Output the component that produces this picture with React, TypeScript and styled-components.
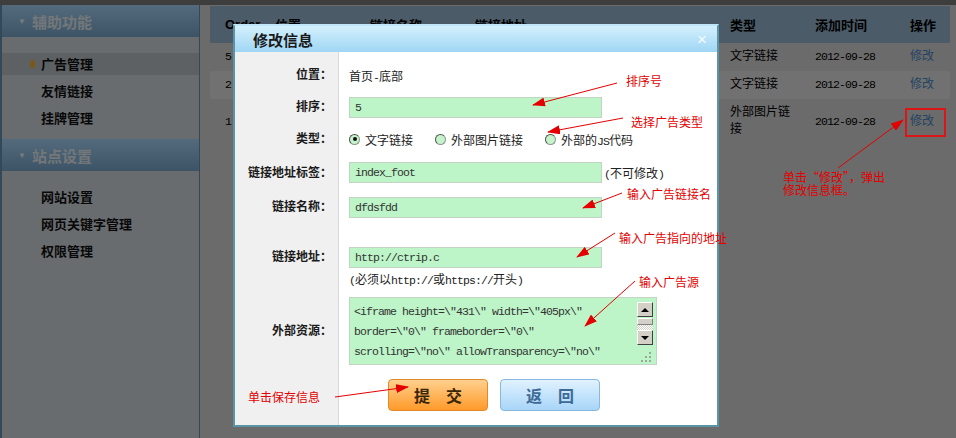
import React from 'react'
import styled, { createGlobalStyle } from 'styled-components'

const GlobalStyle = createGlobalStyle`
  html, body { margin: 0; padding: 0; }
  body {
    font-family: "Liberation Sans", "Noto Sans CJK SC", sans-serif;
    font-size: 12px;
    color: #000;
    background: #d6d6d6;
  }
`

const Page = styled.div`
  position: relative;
  width: 956px;
  height: 438px;
  overflow: hidden;
  background: #d6d6d6;
`

const TopBar = styled.div`
  height: 5px;
  background: #7c7c7c;
`

const Layout = styled.div`
  display: flex;
  height: 433px;
`

const Sidebar = styled.aside`
  width: 200px;
  flex-shrink: 0;
  box-sizing: border-box;
  border-left: 2px solid #6690b2;
  border-right: 1px solid #6690b2;
  background: #d2d8de;
`

const SideHeader = styled.div`
  height: 32px;
  display: flex;
  align-items: center;
  gap: 6px;
  padding-left: 16px;
  background: linear-gradient(#a6d6f8, #7aa8cc);
  color: #e6eef4;
  font-size: 15px;
  font-weight: 700;
`

const Caret = styled.span`
  font-size: 8px;
  color: #eef5fb;
`

const SideList = styled.ul<{ $pad: string }>`
  list-style: none;
  margin: 0;
  padding: ${p => p.$pad};
`

const SideItem = styled.li<{ $active?: boolean }>`
  height: 27px;
  display: flex;
  align-items: center;
  padding-left: 28px;
  font-size: 13px;
  font-weight: 700;
  color: #111;
  background: ${p =>
    p.$active
      ? 'linear-gradient(transparent 3px, #bcc2c8 3px, #bcc2c8 25px, transparent 25px)'
      : 'none'};
  &::before {
    content: '';
    width: 5px;
    height: 8px;
    border-radius: 3px;
    margin-right: 6px;
    background: ${p => (p.$active ? '#f2b32a' : 'transparent')};
  }
`

const Main = styled.main`
  flex: 1;
  padding: 1px 6px 0 10px;
`

const cols = '60px 95px 105px 255px 85px 95px 45px'

const TableHead = styled.div`
  display: grid;
  grid-template-columns: ${cols};
  align-items: center;
  height: 37px;
  background: #96b6d0;
  font-size: 13px;
  font-weight: 700;
`

const TableRow = styled.div<{ $alt?: boolean }>`
  display: grid;
  grid-template-columns: ${cols};
  align-items: center;
  padding: 5px 0 6px;
  line-height: 17px;
  background: ${p => (p.$alt ? '#e2e2e2' : 'transparent')};
`

const Cell = styled.div<{ $first?: boolean }>`
  padding: 0 14px 0 ${p => (p.$first ? '15px' : '5px')};
`

const Mono = styled.span`
  font-family: "Liberation Mono", monospace;
  font-size: 11.5px;
  letter-spacing: -0.9px;
`

const EditLink = styled.a`
  color: #4a88c4;
  text-decoration: none;
`

const Backdrop = styled.div`
  position: absolute;
  inset: 0;
  background: rgba(0, 0, 0, 0.5);
`

const Dialog = styled.div`
  position: absolute;
  left: 233px;
  top: 24px;
  width: 486px;
  height: 403px;
  box-sizing: border-box;
  border: 2px solid #5a94a6;
  border-top-color: #bfe6f8;
  background: #fff;
  display: flex;
  flex-direction: column;
`

const DialogHeader = styled.div`
  height: 26px;
  display: flex;
  align-items: center;
  justify-content: space-between;
  padding: 0 10px 0 18px;
  background: linear-gradient(#d4f0fd, #9fd6f4);
`

const DialogTitle = styled.h2`
  margin: 0;
  font-size: 15px;
  font-weight: 700;
  color: #1a1a1a;
`

const Close = styled.span`
  font-size: 17px;
  line-height: 1;
  color: #f4fbff;
`

const DialogBody = styled.div`
  flex: 1;
  padding-top: 6px;
  background: linear-gradient(
    to right,
    #f0f0f0 0,
    #f0f0f0 103px,
    #dadada 103px,
    #dadada 104px,
    #fff 104px
  );
`

const FormRow = styled.div<{ $h: number; $top?: number }>`
  display: flex;
  box-sizing: border-box;
  height: ${p => p.$h}px;
  align-items: ${p => (p.$top != null ? 'flex-start' : 'center')};
  padding-top: ${p => p.$top ?? 0}px;
`

const Label = styled.div`
  width: 104px;
  box-sizing: border-box;
  padding-right: 7px;
  text-align: right;
  line-height: 20px;
  font-size: 12px;
  font-weight: 700;
  color: #1a1a1a;
`

const Value = styled.div`
  flex: 1;
  display: flex;
  align-items: center;
  padding-left: 10px;
  color: #222;
`

const Stack = styled.div`
  display: flex;
  flex-direction: column;
  gap: 2px;
`

const Field = styled.input`
  width: 253px;
  height: 21px;
  box-sizing: border-box;
  margin: 0;
  padding: 0 5px;
  border: 1px solid #c4d4c4;
  background: #bdf4c8;
  font-family: "Liberation Mono", monospace;
  font-size: 11.5px;
  letter-spacing: -0.9px;
  color: #333;
  outline: none;
`

const Hint = styled.span`
  margin-left: 2px;
`

const RadioOption = styled.label`
  display: inline-flex;
  align-items: center;
  gap: 5px;
  margin-right: 22px;
`

const RadioDot = styled.span<{ $checked?: boolean }>`
  width: 11px;
  height: 11px;
  box-sizing: border-box;
  border-radius: 50%;
  border: 1px solid #8a9a8a;
  border-top-color: #4a564a;
  border-left-color: #4a564a;
  background: #c6f2cc;
  display: flex;
  align-items: center;
  justify-content: center;
  &::after {
    content: '';
    width: 4px;
    height: 4px;
    border-radius: 50%;
    background: ${p => (p.$checked ? '#111' : 'transparent')};
  }
`

const SourceBox = styled.div`
  width: 308px;
  height: 68px;
  box-sizing: border-box;
  border: 1px solid #c4d4c4;
  background: #bdf4c8;
  display: flex;
  justify-content: space-between;
`

const SourceText = styled.div`
  width: 262px;
  padding: 4px 0 0 4px;
  font-family: "Liberation Mono", monospace;
  font-size: 11.5px;
  letter-spacing: -0.9px;
  line-height: 20px;
  color: #333;
`

const ScrollCol = styled.div`
  width: 16px;
  margin-right: 3px;
  padding-top: 4px;
  display: flex;
  flex-direction: column;
  align-items: center;
`

const ScrollBtn = styled.div<{ $dir: 'up' | 'down' }>`
  width: 16px;
  height: 15px;
  box-sizing: border-box;
  background: #d4d0c8;
  border: 1px solid;
  border-color: #fff #404040 #404040 #fff;
  display: flex;
  align-items: center;
  justify-content: center;
  &::after {
    content: '';
    border-left: 4px solid transparent;
    border-right: 4px solid transparent;
    ${p => (p.$dir === 'up' ? 'border-bottom: 4px solid #000;' : 'border-top: 4px solid #000;')}
  }
`

const Thumb = styled.div`
  width: 16px;
  height: 7px;
  margin-top: 1px;
  box-sizing: border-box;
  background: #d4d0c8;
  border: 1px solid;
  border-color: #fff #808080 #808080 #fff;
`

const Track = styled.div`
  width: 16px;
  height: 5px;
  background: repeating-conic-gradient(#ffffff 0 25%, #d4d0c8 0 50%) 0 0 / 2px 2px;
`

const Grip = styled.svg`
  margin-top: auto;
  margin-bottom: 2px;
`

const ButtonRow = styled.div`
  display: flex;
  gap: 12px;
  padding-left: 39px;
`

const Button = styled.button<{ $tone: 'submit' | 'back' }>`
  width: 100px;
  height: 32px;
  box-sizing: border-box;
  margin: 0;
  padding: 0;
  border-radius: 4px;
  border: 1px solid ${p => (p.$tone === 'submit' ? '#e08a2c' : '#86b8e0')};
  background: ${p =>
    p.$tone === 'submit'
      ? 'linear-gradient(#ffd08e, #ff9a2a)'
      : 'linear-gradient(#e0f2ff, #a8d5f8)'};
  color: ${p => (p.$tone === 'submit' ? '#3a2608' : '#3e6a96')};
  font: 700 16px "Noto Sans CJK SC", sans-serif;
`

const Callout = styled.span<{ $x: number; $y: number; $lh?: number }>`
  position: absolute;
  left: ${p => p.$x}px;
  top: ${p => p.$y}px;
  color: #e40000;
  font-family: "Noto Sans CJK SC", sans-serif;
  font-size: 12px;
  line-height: ${p => p.$lh ?? 14}px;
  white-space: nowrap;
`

const Highlight = styled.div`
  position: absolute;
  left: 905px;
  top: 108px;
  width: 41px;
  height: 29px;
  box-sizing: border-box;
  border: 2px solid #dd1515;
`

const ArrowLayer = styled.svg`
  position: absolute;
  left: 0;
  top: 0;
  pointer-events: none;
`

const arrows: [number, number, number, number][] = [
  [617, 83, 533, 105],
  [623, 118, 548, 132],
  [622, 193, 583, 208],
  [615, 233, 577, 257],
  [635, 281, 585, 326],
  [335, 397, 408, 387],
  [838, 168, 903, 120],
]

const rows = [
  { n: '5', type: '文字链接', alt: false },
  { n: '2', type: '文字链接', alt: true },
  { n: '1', type: '外部图片链接', alt: false },
]

export default function App() {
  return (
    <>
      <GlobalStyle />
      <Page>
        <TopBar />
        <Layout>
          <Sidebar>
            <SideHeader>
              <Caret>▼</Caret>辅助功能
            </SideHeader>
            <SideList $pad="13px 0 8px">
              <SideItem $active>广告管理</SideItem>
              <SideItem>友情链接</SideItem>
              <SideItem>挂牌管理</SideItem>
            </SideList>
            <SideHeader>
              <Caret>▼</Caret>站点设置
            </SideHeader>
            <SideList $pad="12px 0 0">
              <SideItem>网站设置</SideItem>
              <SideItem>网页关键字管理</SideItem>
              <SideItem>权限管理</SideItem>
            </SideList>
          </Sidebar>
          <Main>
            <TableHead>
              <Cell $first>Order</Cell>
              <Cell>位置</Cell>
              <Cell>链接名称</Cell>
              <Cell>链接地址</Cell>
              <Cell>类型</Cell>
              <Cell>添加时间</Cell>
              <Cell>操作</Cell>
            </TableHead>
            {rows.map(r => (
              <TableRow key={r.n} $alt={r.alt}>
                <Cell $first><Mono>{r.n}</Mono></Cell>
                <Cell>首页-底部</Cell>
                <Cell><Mono>index_foot</Mono></Cell>
                <Cell><Mono>http://ctrip.com</Mono></Cell>
                <Cell>{r.type}</Cell>
                <Cell><Mono>2012-09-28</Mono></Cell>
                <Cell><EditLink>修改</EditLink></Cell>
              </TableRow>
            ))}
          </Main>
        </Layout>

        <Backdrop />

        <Dialog>
          <DialogHeader>
            <DialogTitle>修改信息</DialogTitle>
            <Close>×</Close>
          </DialogHeader>
          <DialogBody>
            <FormRow $h={34}>
              <Label>位置：</Label>
              <Value><span>首页<Mono>-</Mono>底部</span></Value>
            </FormRow>
            <FormRow $h={30}>
              <Label>排序：</Label>
              <Value><Field readOnly value="5" /></Value>
            </FormRow>
            <FormRow $h={34}>
              <Label>类型：</Label>
              <Value>
                <RadioOption><RadioDot $checked /><span>文字链接</span></RadioOption>
                <RadioOption><RadioDot /><span>外部图片链接</span></RadioOption>
                <RadioOption><RadioDot /><span>外部的<Mono>JS</Mono>代码</span></RadioOption>
              </Value>
            </FormRow>
            <FormRow $h={33}>
              <Label>链接地址标签：</Label>
              <Value>
                <Field readOnly value="index_foot" />
                <Hint><Mono>(</Mono>不可修改<Mono>)</Mono></Hint>
              </Value>
            </FormRow>
            <FormRow $h={36}>
              <Label>链接名称：</Label>
              <Value><Field readOnly value="dfdsfdd" /></Value>
            </FormRow>
            <FormRow $h={65} $top={22}>
              <Label>链接地址：</Label>
              <Value>
                <Stack>
                  <Field readOnly value="http://ctrip.c" />
                  <span>
                    <Mono>(</Mono>必须以<Mono>http://</Mono>或<Mono>https://</Mono>开头<Mono>)</Mono>
                  </span>
                </Stack>
              </Value>
            </FormRow>
            <FormRow $h={82}>
              <Label>外部资源：</Label>
              <Value>
                <SourceBox>
                  <SourceText>
                    {'<iframe height=\\"431\\" width=\\"405px\\" border=\\"0\\" frameborder=\\"0\\" scrolling=\\"no\\" allowTransparency=\\"no\\"'}
                  </SourceText>
                  <ScrollCol>
                    <ScrollBtn $dir="up" />
                    <Thumb />
                    <Track />
                    <ScrollBtn $dir="down" />
                    <Grip width="12" height="12" viewBox="0 0 12 12">
                      {[[10, 2], [10, 6], [6, 6], [10, 10], [6, 10], [2, 10]].map(([x, y]) => (
                        <rect key={`${x}-${y}`} x={x} y={y} width="2" height="2" fill="#9aaa9a" />
                      ))}
                    </Grip>
                  </ScrollCol>
                </SourceBox>
              </Value>
            </FormRow>
            <FormRow $h={52} $top={7}>
              <Label />
              <Value>
                <ButtonRow>
                  <Button $tone="submit">提　交</Button>
                  <Button $tone="back">返　回</Button>
                </ButtonRow>
              </Value>
            </FormRow>
          </DialogBody>
        </Dialog>

        <Highlight />
        <Callout $x={626} $y={74}>排序号</Callout>
        <Callout $x={631} $y={115}>选择广告类型</Callout>
        <Callout $x={627} $y={187}>输入广告链接名</Callout>
        <Callout $x={619} $y={231}>输入广告指向的地址</Callout>
        <Callout $x={639} $y={275}>输入广告源</Callout>
        <Callout $x={248} $y={390}>单击保存信息</Callout>
        <Callout $x={783} $y={170} $lh={13}>
          单击“修改”，弹出
          <br />
          修改信息框。
        </Callout>

        <ArrowLayer width="956" height="438" viewBox="0 0 956 438">
          <defs>
            <marker
              id="tip"
              markerWidth="13"
              markerHeight="9"
              refX="12"
              refY="4.5"
              orient="auto"
              markerUnits="userSpaceOnUse"
            >
              <path d="M0,0 L13,4.5 L0,9 z" fill="#e40000" />
            </marker>
          </defs>
          {arrows.map(([x1, y1, x2, y2]) => (
            <line
              key={`${x1}-${y1}`}
              x1={x1}
              y1={y1}
              x2={x2}
              y2={y2}
              stroke="#e40000"
              strokeWidth="1"
              markerEnd="url(#tip)"
            />
          ))}
        </ArrowLayer>
      </Page>
    </>
  )
}
